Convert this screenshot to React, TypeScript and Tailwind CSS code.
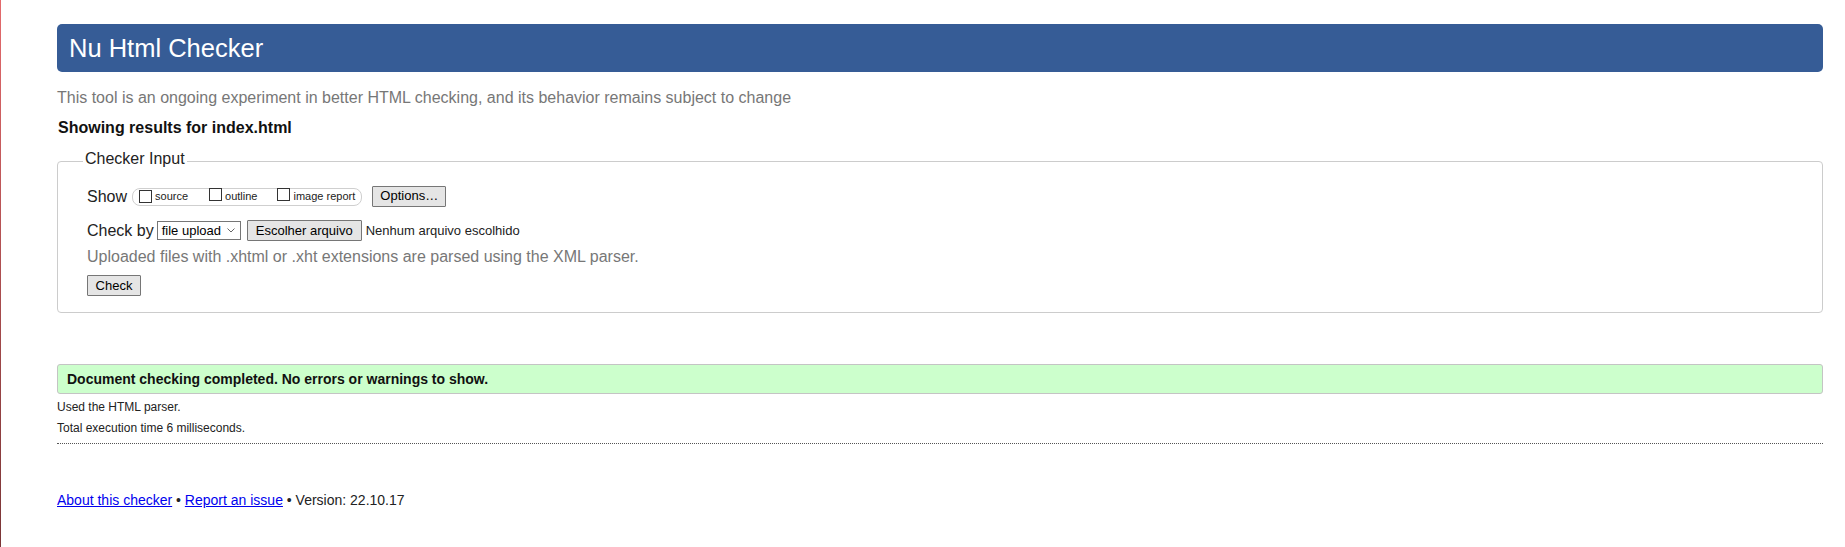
import React from "react";

function Box() {
  return <span className="inline-block w-[13px] h-[13px] border border-[#333] bg-white shrink-0" />;
}

function Btn({ children, className = "" }: { children: React.ReactNode; className?: string }) {
  return (
    <span
      className={
        "inline-flex items-center justify-center h-[21px] px-[7px] bg-[#e5e5e5] border border-[#767676] rounded-[1px] text-[13px] text-black leading-none " +
        className
      }
    >
      {children}
    </span>
  );
}

export default function App() {
  return (
    <div className="flex min-h-[547px] bg-white font-['Liberation_Sans',Arial,sans-serif] text-[#222]">
      <div className="w-px shrink-0 bg-linear-to-b from-[#e46a6c] to-[#7a3536]" />
      <div className="flex-1 pl-[56px] pr-[22px] pt-[24px]">
        <div className="h-[48px] bg-[#365c96] rounded-[5px] flex items-center pl-[12px] text-white text-[25.5px]">
          Nu Html Checker
        </div>
        <div className="mt-[17px] h-[18px] leading-[18px] text-[16px] text-[#777]">
          This tool is an ongoing experiment in better HTML checking, and its behavior remains subject to change
        </div>
        <div className="mt-[12px] h-[18px] leading-[18px] text-[16px] font-bold text-[#111] pl-px">
          Showing results for index.html
        </div>

        <fieldset className="mt-[13px] border border-[#cccccc] rounded-[4px] pt-[13px] pb-[16px]">
          <legend className="ml-[25px] px-[2px] pb-[5px] text-[16px] leading-[18px] text-[#222]">Checker Input</legend>

          <div className="pl-[29px] pr-4">
            <div className="h-[21px] flex items-center">
              <span className="text-[16px]">Show</span>
              <span className="ml-[5px] h-[18px] flex items-center border border-[#cfcfcf] rounded-[8px] pl-[6px] pr-[6px] text-[11px] text-[#222]">
                <Box />
                <span className="ml-[3px]">source</span>
                <span className="ml-[21px]"><Box /></span>
                <span className="ml-[3px]">outline</span>
                <span className="ml-[20px]"><Box /></span>
                <span className="ml-[3px]">image report</span>
              </span>
              <Btn className="ml-[10px] w-[74px] pb-[2px]">Options…</Btn>
            </div>

            <div className="mt-[13px] h-[21px] flex items-center">
              <span className="text-[16px]">Check by</span>
              <span className="ml-[3px] h-[19px] w-[84px] flex items-center justify-between border border-[#767676] bg-white pl-[4px] pr-[5px] text-[13px] text-black">
                <span>file upload</span>
                <svg width="8" height="5" viewBox="0 0 8 5" fill="none">
                  <path d="M0.5 0.5 L4 4 L7.5 0.5" stroke="#666" strokeWidth="1" />
                </svg>
              </span>
              <Btn className="ml-[6px] w-[115px]">Escolher arquivo</Btn>
              <span className="ml-[4px] text-[13px] text-[#222]">Nenhum arquivo escolhido</span>
            </div>

            <div className="mt-[7px] h-[18px] leading-[18px] text-[16px] text-[#777]">
              Uploaded files with .xhtml or .xht extensions are parsed using the XML parser.
            </div>

            <div className="mt-[9px] flex">
              <Btn className="w-[54px]">Check</Btn>
            </div>
          </div>
        </fieldset>

        <div className="mt-[51px] h-[30px] flex items-center bg-[#ccffcc] border border-[#c4c4c4] rounded-[3px] pl-[9px] text-[14px] font-bold text-[#111]">
          Document checking completed. No errors or warnings to show.
        </div>
        <div className="mt-[3px] text-[12px] leading-[21px] text-[#222]">
          <div>Used the HTML parser.</div>
          <div>Total execution time 6 milliseconds.</div>
        </div>
        <div className="mt-[4px] border-b border-dotted border-[#555]" />

        <div className="mt-[48px] text-[14px] leading-[16px] text-[#222]">
          <a href="#" className="text-[#0000ee] underline">About this checker</a>
          <span> • </span>
          <a href="#" className="text-[#0000ee] underline">Report an issue</a>
          <span> • Version: 22.10.17</span>
        </div>
      </div>
    </div>
  );
}
